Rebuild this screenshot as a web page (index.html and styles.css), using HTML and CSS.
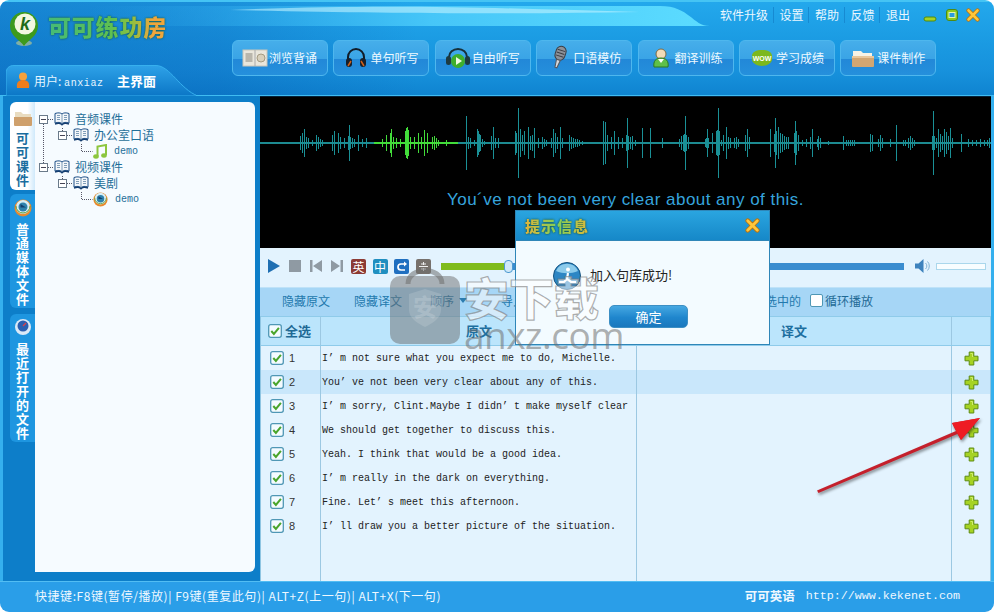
FILE: index.html
```html
<!DOCTYPE html>
<html lang="zh-CN">
<head>
<meta charset="utf-8">
<title>可可练功房</title>
<link rel="stylesheet" href="styles.css">
</head>
<body>
<svg class="defs" width="0" height="0" aria-hidden="true">
  <defs>
    <symbol id="book" viewBox="0 0 16 14">
      <path d="M1 1.5C4 .5 6.500 .7 8 2c1.500-1.300 4-1.500 7-.5V11c-3-1-5.500-.8-7 .5-1.500-1.300-4-1.500-7-.5z" fill="#f4f7fa" stroke="#1d4f86"/>
      <path d="M8 2v9.500M3 3.500h3M3 5.500h3M3 7.500h3M10 3.500h3M10 5.500h3M10 7.500h3" stroke="#7f9db8" fill="none"/>
      <path d="M1 12c3-1 5.500-.8 7 .7 1.500-1.500 4-1.700 7-.7" stroke="#153e70" stroke-width="1.500" fill="none"/>
    </symbol>
    <symbol id="minus" viewBox="0 0 9 9">
      <rect x=".5" y=".5" width="8" height="8" fill="#fff" stroke="#6a7a8a"/>
      <path d="M2 4.500h5" stroke="#445"/>
    </symbol>
    <symbol id="plus" viewBox="0 0 15 15">
      <path d="M5.200 1h4.600v4.200H14v4.600H9.800V14H5.200V9.800H1V5.200h4.200z" fill="#a6d323" stroke="#5f8c14" stroke-linejoin="round"/>
      <path d="M6.500 2.500h2v3.500" stroke="#d0ee6a" fill="none"/>
    </symbol>
    <symbol id="check" viewBox="0 0 14 14">
      <rect x=".7" y=".7" width="12.600" height="12.600" rx="2" fill="#f4fbff" stroke="#4f97b5" stroke-width="1.300"/>
      <path d="M3.300 7l2.600 3 5-6.200" fill="none" stroke="#4aa52b" stroke-width="2"/>
    </symbol>
    <symbol id="disc" viewBox="0 0 18 18">
      <circle cx="9" cy="9" r="8.500" fill="#e88a2c"/>
      <circle cx="9" cy="8" r="7" fill="#d8eef5"/>
      <circle cx="9" cy="8" r="4.500" fill="#2f82ad"/>
      <path d="M6.500 5l5.500 3.500H6.500z" fill="#123f6c"/>
      <path d="M2 7a7 7 0 0 0 14 0" fill="none" stroke="#5a9f3a"/>
    </symbol>
    <linearGradient id="sweep" x1="0" x2="1" y1="0" y2="0">
      <stop offset="0" stop-color="#2aa6ea" stop-opacity="0"/>
      <stop offset=".55" stop-color="#46c6f8"/>
      <stop offset="1" stop-color="#5cdcff"/>
    </linearGradient>
    <linearGradient id="tabfill" x1="0" x2="0" y1="0" y2="1">
      <stop offset="0" stop-color="#2ea2e8"/>
      <stop offset="1" stop-color="#0b76c6"/>
    </linearGradient>
  </defs>
</svg>

<div class="app">
  <header class="header">
    <svg class="sweep" viewBox="0 0 994 30" width="994" height="30" aria-hidden="true">
      <path d="M90 6H660c30 0 32 20 50 20H90z" fill="url(#sweep)"/>
      <path d="M230 10C400 3 520 9 640 12 520 14 400 14 230 10z" fill="#bff1ff" opacity=".6"/>
    </svg>
    <div class="head-left">
      <div class="brand">
        <svg class="logo" viewBox="0 0 30 36" width="30" height="36" aria-hidden="true">
          <ellipse cx="15" cy="32" rx="8" ry="3" fill="#9dbb9a" opacity=".8"/>
          <path d="M15 35C11 29 1 25 1 15a14 14 0 0 1 28 0c0 10-10 14-14 20z" fill="#3d9a1e"/>
          <circle cx="16" cy="13" r="10.500" fill="#f3f7e0"/>
          <text x="16" y="19" class="logo-k">k</text>
        </svg>
        <span class="brand-name">可可练功房</span>
      </div>
      <div class="user-tab">
        <svg class="tab-shape" viewBox="0 0 190 31" width="190" height="31" aria-hidden="true">
          <path d="M0 31V9C0 3 3 .5 8 .5H150c14 0 24 24 42 30.500z" fill="url(#tabfill)" stroke="#37b0ee"/>
        </svg>
        <svg class="user-ico" viewBox="0 0 14 17" width="14" height="17" aria-hidden="true">
          <circle cx="7" cy="4.500" r="4" fill="#f6a13a"/>
          <path d="M1 16c-1-6 2-8 6-8s7 2 6 8z" fill="#ee7d1c"/>
        </svg>
        <span class="user-name">用户: <span class="mono-s">anxiaz</span></span>
        <b class="user-main">主界面</b>
      </div>
    </div>
    <div class="head-right">
      <div class="topbar">
        <nav class="links">
          <a>软件升级</a><a>设置</a><a>帮助</a><a>反馈</a><a>退出</a>
        </nav>
        <div class="winbtns">
          <svg viewBox="0 0 14 14" width="14" height="14" aria-hidden="true"><rect x="1" y="9" width="12" height="4" rx="2" fill="#a6d323" stroke="#4f8a14"/></svg>
          <svg viewBox="0 0 14 14" width="14" height="14" aria-hidden="true"><rect x="1.500" y="1.500" width="11" height="11" rx="2.500" fill="#8fcb22" stroke="#4f8a14"/><rect x="4" y="4.500" width="6" height="5" fill="#2a9ce0" stroke="#e5f6b0"/></svg>
          <svg viewBox="0 0 14 14" width="14" height="14" aria-hidden="true"><path d="M2.500 2.500l9 9M11.500 2.500l-9 9" stroke="#b8730e" stroke-width="4.200" stroke-linecap="round"/><path d="M2.500 2.500l9 9M11.500 2.500l-9 9" stroke="#ffc63a" stroke-width="2.600" stroke-linecap="round"/></svg>
        </div>
      </div>
      <nav class="nav">
        <a class="nav-btn">
          <svg viewBox="0 0 26 18" width="26" height="18" aria-hidden="true"><rect x="1" y="1" width="24" height="16" fill="#e9e6dc" stroke="#c9c5b8"/><path d="M13 1v16" stroke="#aaa"/><rect x="3.500" y="4" width="7" height="9" fill="#b9b6ac"/><circle cx="19" cy="9" r="4" fill="#d8d0bc" stroke="#a59b82"/></svg>
          <span>浏览背诵</span>
        </a>
        <a class="nav-btn">
          <svg viewBox="0 0 22 22" width="22" height="22" aria-hidden="true"><path d="M3 13V10a8 8 0 0 1 16 0v3" fill="none" stroke="#111c28" stroke-width="2"/><rect x="1" y="11" width="6" height="9" rx="3" fill="#16202c"/><rect x="15" y="11" width="6" height="9" rx="3" fill="#16202c"/><path d="M3 19l3-5M19 19l-3-5" stroke="#d0611c" stroke-width="1.500"/></svg>
          <span>单句听写</span>
        </a>
        <a class="nav-btn">
          <svg viewBox="0 0 24 22" width="24" height="22" aria-hidden="true"><path d="M3 12V10a9 8 0 0 1 18 0v2" fill="none" stroke="#16303a" stroke-width="2"/><rect x="0" y="9" width="5" height="9" rx="2.500" fill="#1d3a40"/><rect x="19" y="9" width="5" height="9" rx="2.500" fill="#1d3a40"/><circle cx="12" cy="14" r="7" fill="#3fae2c"/><path d="M10 10l6 4-6 4z" fill="#f2fbe2"/></svg>
          <span>自由听写</span>
        </a>
        <a class="nav-btn">
          <svg viewBox="0 0 20 26" width="20" height="26" aria-hidden="true"><g transform="rotate(18 10 13)"><rect x="5" y="1" width="10" height="14" rx="5" fill="#8d9198" stroke="#3a3d44"/><path d="M6 5h8M6 8h8M6 11h8" stroke="#3a3d44"/><path d="M8 15h4l-1 8H9z" fill="#d6d8dc" stroke="#54575e"/></g></svg>
          <span>口语模仿</span>
        </a>
        <a class="nav-btn">
          <svg viewBox="0 0 18 22" width="18" height="22" aria-hidden="true"><circle cx="9" cy="7" r="5" fill="#f2dcb8" stroke="#7c6a44"/><path d="M2 20c-1-6 2-9 7-9s8 3 7 9z" fill="#5fc04a" stroke="#2c7a22"/><path d="M6 12h6l-3 4z" fill="#fff"/></svg>
          <span>翻译训练</span>
        </a>
        <a class="nav-btn">
          <svg viewBox="0 0 24 20" width="24" height="20" aria-hidden="true"><path d="M2 10C1 4 6 2 12 2s11 2 10 8c1 5-5 8-10 8S1 15 2 10z" fill="#7cb81e"/><text x="12" y="12.500" class="wow">WOW</text></svg>
          <span>学习成绩</span>
        </a>
        <a class="nav-btn">
          <svg viewBox="0 0 24 20" width="24" height="20" aria-hidden="true"><path d="M2 3h8l2 2h9v6H2z" fill="#f7f3e6"/><path d="M1 8h22v10a1 1 0 0 1-1 1H2a1 1 0 0 1-1-1z" fill="#d2a672"/><path d="M1 8h22v2H1z" fill="#e8c79c"/></svg>
          <span>课件制作</span>
        </a>
      </nav>
    </div>
  </header>

  <main class="main">
    <aside class="side">
      <div class="tabs">
        <div class="tab tab-on">
          <svg viewBox="0 0 18 14" width="18" height="14" aria-hidden="true"><path d="M1 0h6l2 2h8v5H1z" fill="#e9dcc0"/><path d="M0 5h18v8a1 1 0 0 1-1 1H1a1 1 0 0 1-1-1z" fill="#cfa06c"/></svg>
          <b class="tab-txt">可可课件</b>
        </div>
        <div class="tab tab-2">
          <svg width="18" height="18" aria-hidden="true"><use href="#disc"/></svg>
          <b class="tab-txt">普通媒体文件</b>
        </div>
        <div class="tab tab-3">
          <svg viewBox="0 0 18 18" width="18" height="18" aria-hidden="true"><circle cx="9" cy="9" r="8" fill="#dbe9f7"/><circle cx="9" cy="8" r="5.500" fill="#2b5fb0"/><path d="M9 8l3-3" stroke="#d8404a" stroke-width="1.500"/></svg>
          <b class="tab-txt">最近打开的文件</b>
        </div>
      </div>
      <div class="tree">
        <svg class="tree-lines" width="110" height="110" aria-hidden="true">
          <path d="M8.500 16V63M13 17.500h6M27.500 26V31M32 33.500h6M27.500 74V79M32 81.500h6M46.500 42V49.500h11M46.500 90V97.500h11M13 65.500h6" fill="none" stroke="#556" stroke-dasharray="1 1"/>
        </svg>
        <div class="node">
          <svg class="tw" width="9" height="9" aria-hidden="true"><use href="#minus"/></svg>
          <svg class="bk" width="16" height="14" aria-hidden="true"><use href="#book"/></svg>
          <span>音频课件</span>
        </div>
        <div class="node lv1">
          <svg class="tw" width="9" height="9" aria-hidden="true"><use href="#minus"/></svg>
          <svg class="bk" width="16" height="14" aria-hidden="true"><use href="#book"/></svg>
          <span>办公室口语</span>
        </div>
        <div class="node lv2">
          <svg viewBox="0 0 14 15" width="14" height="15" aria-hidden="true"><path d="M4.500 12V2.500L13 1v10" fill="none" stroke="#8cc63e" stroke-width="2"/><ellipse cx="3" cy="12.500" rx="2.800" ry="2.200" fill="#8cc63e"/><ellipse cx="11" cy="11.500" rx="2.800" ry="2.200" fill="#8cc63e"/></svg>
          <span class="leaf">demo</span>
        </div>
        <div class="node">
          <svg class="tw" width="9" height="9" aria-hidden="true"><use href="#minus"/></svg>
          <svg class="bk" width="16" height="14" aria-hidden="true"><use href="#book"/></svg>
          <span>视频课件</span>
        </div>
        <div class="node lv1">
          <svg class="tw" width="9" height="9" aria-hidden="true"><use href="#minus"/></svg>
          <svg class="bk" width="16" height="14" aria-hidden="true"><use href="#book"/></svg>
          <span>美剧</span>
        </div>
        <div class="node lv2">
          <svg width="15" height="15" aria-hidden="true"><use href="#disc"/></svg>
          <span class="leaf">demo</span>
        </div>
      </div>
    </aside>

    <section class="content">
      <div class="wave">
        <svg viewBox="0 0 731 92" width="731" height="92" aria-hidden="true">
          <path class="w-base" d="M0 46H114M198 46H731"/>
          <path class="w-spikes" d="M40 46v-7 14M42 46v-10 20M44 46v-14 28M46 46v-6 12M48 46v-5 10M52 46v-3 6M56 46v-8 16M58 46v-6 12M60 46v-4 8M62 46v-3 6M72 46v-8 16M74 46v-12 24M78 46v-10 20M80 46v-6 12M84 46v-5 10M88 46v-7 14M89 46v-18 36M90 46v-6 12M92 46v-5 10M94 46v-4 8M98 46v-8 16M102 46v-4 8M106 46v-5 10M206 46v-27 54M208 46v-6 12M210 46v-5 10M214 46v-3 6M217 46v-14 28M218 46v-12 24M219 46v-9 18M220 46v-8 16M222 46v-4 8M224 46v-2 4M231 46v-7 14M233 46v-16 32M235 46v-5 10M238 46v-5 10M255 46v-12 24M256 46v-10 20M258 46v-35 70M260 46v-14 28M262 46v-8 16M264 46v-12 24M268 46v-16 32M270 46v-7 14M272 46v-8 16M274 46v-15 30M278 46v-5 10M282 46v-6 12M284 46v-4 8M286 46v-3 6M291 46v-5 10M293 46v-14 28M295 46v-10 20M297 46v-6 12M300 46v-16 32M302 46v-5 10M309 46v-8 16M311 46v-6 12M313 46v-5 10M315 46v-4 8M317 46v-4 8M319 46v-3 6M322 46v-2 4M343 46v-22 44M345 46v-21 42M347 46v-8 16M351 46v-6 12M354 46v-12 24M358 46v-6 12M362 46v-5 10M366 46v-8 16M367 46v-25 50M368 46v-7 14M370 46v-6 12M372 46v-7 14M375 46v-3 6M382 46v-15 30M390 46v-15 30M402 46v-5 10M419 46v-4 8M421 46v-7 14M423 46v-8 16M424 46v-9 18M425 46v-27 54M426 46v-8 16M428 46v-6 12M445 46v-4 8M446 46v-5 10M447 46v-14 28M448 46v-5 10M452 46v-10 20M456 46v-12 24M457 46v-13 26M458 46v-35 70M459 46v-12 24M461 46v-3 6M463 46v-8 16M466 46v-16 32M468 46v-6 12M470 46v-5 10M474 46v-5 10M476 46v-6 12M478 46v-4 8M485 46v-8 16M487 46v-14 28M489 46v-6 12M510 46v-14 28M514 46v-9 18M515 46v-25 50M516 46v-12 24M518 46v-16 32M520 46v-10 20M522 46v-9 18M524 46v-7 14M526 46v-6 12M528 46v-6 12M534 46v-10 20M535 46v-22 44M536 46v-12 24M538 46v-8 16M542 46v-3 6M546 46v-4 8M550 46v-6 12M552 46v-14 28M557 46v-4 8M558 46v-7 14M560 46v-5 10M568 46v-2 4M583 46v-7 14M586 46v-3 6M588 46v-3 6M590 46v-3 6M592 46v-3 6M594 46v-3 6M610 46v-9 18M612 46v-8 16M618 46v-4 8M620 46v-8 16M622 46v-5 10M630 46v-4 8M636 46v-18 36M643 46v-3 6M645 46v-3 6M648 46v-5 10M650 46v-7 14M652 46v-5 10M654 46v-3 6M672 46v-7 14M673 46v-32 64M674 46v-7 14M676 46v-5 10M678 46v-14 28M680 46v-9 18M682 46v-7 14M684 46v-14 28M686 46v-11 22M688 46v-7 14M690 46v-15 30M692 46v-5 10M701 46v-9 18M708 46v-4 8M712 46v-3 6M716 46v-3 6M720 46v-4 8M724 46v-3 6M727 46v-3 6M729 46v-5 10"/>
          <path class="w-base w-green" d="M114 46H198"/>
          <path class="w-spikes w-green" d="M122 46v-4 8M126 46v-8 16M130 46v-10 20M131 46v-14 28M133 46v-6 12M136 46v-5 10M140 46v-4 8M145 46v-12 24M146 46v-15 30M147 46v-16 32M148 46v-13 26M150 46v-6 12M154 46v-6 12M158 46v-10 20M161 46v-6 12M164 46v-13 26M167 46v-10 20M172 46v-6 12M174 46v-7 14M176 46v-5 10M178 46v-3 6M186 46v-3 6"/>
        </svg>
        <p class="sentence">You´ve not been very clear about any of this.</p>
      </div>

      <div class="controls">
        <div class="transport">
          <svg viewBox="0 0 12 14" width="12" height="14" aria-hidden="true"><path d="M0 0l12 7-12 7z" fill="#1f6fb2"/></svg>
          <svg viewBox="0 0 12 12" width="12" height="12" aria-hidden="true"><rect width="12" height="12" fill="#8f9aa3"/></svg>
          <svg viewBox="0 0 12 12" width="12" height="12" aria-hidden="true"><path d="M0 0h2.500v12H0zM12 0v12L3 6z" fill="#8f9aa3"/></svg>
          <svg viewBox="0 0 12 12" width="12" height="12" aria-hidden="true"><path d="M12 0H9.500v12H12zM0 0v12l9-6z" fill="#8f9aa3"/></svg>
        </div>
        <div class="modes">
          <b class="mode m-en">英</b>
          <b class="mode m-zh">中</b>
          <span class="mode m-loop"><svg viewBox="0 0 15 15" width="15" height="15" aria-hidden="true"><path d="M11 5H7a3 3 0 0 0 0 6h4" fill="none" stroke="#fff" stroke-width="1.700"/><path d="M10 2.500L13 5l-3 2.500z" fill="#fff"/></svg></span>
          <span class="mode m-gray"><svg viewBox="0 0 15 15" width="15" height="15" aria-hidden="true"><path d="M3 7.500h9M7.500 3v3M7.500 9v3M5 5h5M5 10h5" stroke="#eee"/></svg></span>
        </div>
        <div class="progress">
          <div class="prog-done"></div>
          <span class="prog-knob"></span>
        </div>
        <svg class="spk" viewBox="0 0 15 14" width="15" height="14" aria-hidden="true"><path d="M0 4.500h3.500L8.500 0v14l-5-4.500H0z" fill="#3d82bd"/><path d="M10.500 4a4 4 0 0 1 0 6M12.500 2.500a6.500 6.500 0 0 1 0 9" fill="none" stroke="#7fb0d4"/></svg>
        <div class="volume"></div>
      </div>

      <div class="toolbar">
        <div class="tools">
          <a>隐藏原文</a><a>隐藏译文</a><a class="order">顺序 <i class="caret"></i></a><a>导入句库</a>
        </div>
        <div class="tools-end">
          <a>删除选中的</a>
          <label class="loop"><span class="box"></span>循环播放</label>
        </div>
      </div>

      <div class="table">
        <div class="row thead">
          <div class="c c1"><svg width="14" height="14" aria-hidden="true"><use href="#check"/></svg><b>全选</b></div>
          <div class="c c2"><b>原文</b></div>
          <div class="c c3"><b>译文</b></div>
          <div class="c c4"></div>
        </div>
        <div class="row">
          <div class="c c1"><svg width="14" height="14" aria-hidden="true"><use href="#check"/></svg><span>1</span></div>
          <div class="c c2 en">I’ m not sure what you expect me to do, Michelle.</div>
          <div class="c c3"></div>
          <div class="c c4"><svg width="15" height="15" aria-hidden="true"><use href="#plus"/></svg></div>
        </div>
        <div class="row row-on">
          <div class="c c1"><svg width="14" height="14" aria-hidden="true"><use href="#check"/></svg><span>2</span></div>
          <div class="c c2 en">You’ ve not been very clear about any of this.</div>
          <div class="c c3"></div>
          <div class="c c4"><svg width="15" height="15" aria-hidden="true"><use href="#plus"/></svg></div>
        </div>
        <div class="row">
          <div class="c c1"><svg width="14" height="14" aria-hidden="true"><use href="#check"/></svg><span>3</span></div>
          <div class="c c2 en">I’ m sorry, Clint.Maybe I didn’ t make myself clear</div>
          <div class="c c3"></div>
          <div class="c c4"><svg width="15" height="15" aria-hidden="true"><use href="#plus"/></svg></div>
        </div>
        <div class="row">
          <div class="c c1"><svg width="14" height="14" aria-hidden="true"><use href="#check"/></svg><span>4</span></div>
          <div class="c c2 en">We should get together to discuss this.</div>
          <div class="c c3"></div>
          <div class="c c4"><svg width="15" height="15" aria-hidden="true"><use href="#plus"/></svg></div>
        </div>
        <div class="row">
          <div class="c c1"><svg width="14" height="14" aria-hidden="true"><use href="#check"/></svg><span>5</span></div>
          <div class="c c2 en">Yeah. I think that would be a good idea.</div>
          <div class="c c3"></div>
          <div class="c c4"><svg width="15" height="15" aria-hidden="true"><use href="#plus"/></svg></div>
        </div>
        <div class="row">
          <div class="c c1"><svg width="14" height="14" aria-hidden="true"><use href="#check"/></svg><span>6</span></div>
          <div class="c c2 en">I’ m really in the dark on everything.</div>
          <div class="c c3"></div>
          <div class="c c4"><svg width="15" height="15" aria-hidden="true"><use href="#plus"/></svg></div>
        </div>
        <div class="row">
          <div class="c c1"><svg width="14" height="14" aria-hidden="true"><use href="#check"/></svg><span>7</span></div>
          <div class="c c2 en">Fine. Let’ s meet this afternoon.</div>
          <div class="c c3"></div>
          <div class="c c4"><svg width="15" height="15" aria-hidden="true"><use href="#plus"/></svg></div>
        </div>
        <div class="row">
          <div class="c c1"><svg width="14" height="14" aria-hidden="true"><use href="#check"/></svg><span>8</span></div>
          <div class="c c2 en">I’ ll draw you a better picture of the situation.</div>
          <div class="c c3"></div>
          <div class="c c4"><svg width="15" height="15" aria-hidden="true"><use href="#plus"/></svg></div>
        </div>
        <div class="row row-fill">
          <div class="c c1"></div><div class="c c2"></div><div class="c c3"></div><div class="c c4"></div>
        </div>
      </div>
    </section>
  </main>

  <footer class="status">
    <span class="keys">快捷键:F8键(暂停/播放)| F9键(重复此句)| ALT+Z(上一句)| ALT+X(下一句)</span>
    <span class="site"><b>可可英语</b><span class="url">http://www.kekenet.com</span></span>
  </footer>

  <div class="dialog">
    <div class="dlg-head">
      <b class="dlg-title">提示信息</b>
      <svg viewBox="0 0 14 14" width="15" height="15" aria-hidden="true"><path d="M2.500 2.500l9 9M11.500 2.500l-9 9" stroke="#b8730e" stroke-width="4.200" stroke-linecap="round"/><path d="M2.500 2.500l9 9M11.500 2.500l-9 9" stroke="#ffc63a" stroke-width="2.600" stroke-linecap="round"/></svg>
    </div>
    <div class="dlg-body">
      <div class="dlg-msg">
        <svg viewBox="0 0 28 28" width="28" height="28" aria-hidden="true"><circle cx="14" cy="14" r="13.500" fill="#2d86c4" stroke="#14527f"/><path d="M3 9a12 12 0 0 1 22 0c-7 3-15 3-22 0z" fill="#8ccbeb"/><circle cx="15" cy="7.500" r="2" fill="#fff"/><path d="M15 11l-1 6 4 3h5M14 17l-3 3H6" fill="none" stroke="#fff" stroke-width="2.200"/></svg>
        <span class="dlg-text">加入句库成功!</span>
      </div>
      <button class="dlg-ok" type="button">确定</button>
    </div>
  </div>

  <svg class="arrow" viewBox="0 0 170 80" width="170" height="80" aria-hidden="true">
    <path d="M2 74.500L141 15 137 7 165 2 146 24 142.500 18 3.500 77z" fill="#c4202c"/>
    <path d="M137 7L165 2 146 24z" fill="#ee1c24"/>
  </svg>

  <div class="mark">
    <svg viewBox="0 0 70 80" width="70" height="80" aria-hidden="true">
      <path d="M18 20C18 2 52 2 52 20" fill="none" stroke="#6d6d6d" stroke-opacity=".55" stroke-width="5"/>
      <rect y="12" width="70" height="68" rx="10" fill="#6d6d6d" fill-opacity=".5"/>
      <path d="M19 30l16-5 16 5v16c0 8-8 13-16 17-8-4-16-9-16-17z" fill="#fff" fill-opacity=".14"/>
      <text x="35" y="52" class="mark-glyph">安</text>
    </svg>
    <div class="mark-text">
      <span class="mark-cn">安下载</span>
      <span class="mark-en">anxz.com</span>
    </div>
  </div>
</div>
</body>
</html>
```

FILE: styles.css
```css
* { box-sizing: border-box; }
html, body { margin: 0; padding: 0; background: #fff; }
body { font-family: "Noto Sans CJK SC", "Liberation Sans", sans-serif; font-size: 12px; }
.defs { position: absolute; }
p { margin: 0; }
svg { display: block; flex: none; }

.app {
  position: relative;
  width: 994px;
  height: 612px;
  display: flex;
  flex-direction: column;
  overflow: hidden;
  border-radius: 9px 9px 9px 9px;
}

/* header */
.header {
  position: relative;
  height: 96px;
  display: flex;
  border-top: 2px solid #45c4f4;
  border-bottom: 1px solid #3fbcf2;
  background:
    linear-gradient(90deg, rgba(4, 78, 170, .38), rgba(4, 78, 170, .28) 22%, rgba(4, 78, 170, 0) 42%),
    linear-gradient(180deg, #23a8ec 0, #1a9ae2 45%, #1791dc 75%, #0f84d0 100%);
}
.sweep { position: absolute; left: 0; top: -2px; }
.head-left {
  position: relative;
  width: 232px;
  display: flex;
  flex-direction: column;
  justify-content: space-between;
}
.brand { display: flex; align-items: center; gap: 9px; padding: 9px 0 0 9px; }
.logo-k { font: italic bold 18px "Liberation Sans", sans-serif; fill: #1f6b18; text-anchor: middle; }
.brand-name {
  font-size: 23px;
  font-weight: 900;
  letter-spacing: .8px;
  line-height: 30px;
  margin-top: -7px;
  background: linear-gradient(90deg, #45bb78, #5fc050 55%, #8cc040 70%, #f0a63c 88%);
  -webkit-background-clip: text;
  background-clip: text;
  color: transparent;
  filter: drop-shadow(0 0 1px #155a38);
}
.user-tab {
  position: relative;
  margin-left: 6px;
  height: 30px;
  display: flex;
  align-items: center;
  color: #fff;
  padding-left: 10px;
}
.tab-shape { position: absolute; left: 0; top: 0; }
.user-ico { position: relative; }
.user-name { position: relative; margin-left: 4px; font-size: 12px; color: #e6f6ff; width: 83px; }
.mono-s { font: 10px "Liberation Mono", monospace; letter-spacing: .6px; }
.user-main { position: relative; font-size: 13px; }

.head-right { position: relative; flex: 1; display: flex; flex-direction: column; }
.topbar { display: flex; justify-content: flex-end; align-items: center; height: 26px; padding: 0 14px 0 0; }
.links { display: flex; color: #eaf7ff; font-size: 12px; line-height: 16px; }
.links a { padding: 0 5px 0 5.500px; border-left: 1px solid #168ad2; }
.links a:first-child { border-left: 0; }
.winbtns { display: flex; gap: 7.500px; margin-left: 8px; }

.nav { display: flex; gap: 5.400px; margin-top: 12px; }
.nav-btn {
  width: 96px;
  height: 36px;
  padding-left: 8px;
  display: flex;
  align-items: center;
  border: 1px solid #4eb7ee;
  border-radius: 6px;
  color: #eef9ff;
  font-size: 12px;
  background: linear-gradient(180deg, #46aeea 0, #3aa4e6 52%, #2288d8 54%, #2590dc 100%);
}
.nav-btn svg { width: 28px; }
.nav-btn span { padding-bottom: 2px; }
.wow { font: bold 7px "Liberation Sans", sans-serif; fill: #fff; text-anchor: middle; }

/* main */
.main {
  flex: 1;
  display: flex;
  min-height: 0;
  background: #0d7ec9;
  border-left: 3px solid #35b0ee;
  border-right: 3px solid #35b0ee;
}
.side { width: 257px; display: flex; padding: 6px 5px 9px 7px; }
.tabs { width: 25px; display: flex; flex-direction: column; }
.tab {
  display: flex;
  flex-direction: column;
  align-items: center;
  border-radius: 6px 0 0 6px;
  background: #1e96e0;
  color: #fff;
}
.tab-txt { width: 14px; font-size: 13px; line-height: 14px; text-align: center; }
.tab-on {
  height: 88px;
  padding-top: 10px;
  color: #1a6d9e;
  background: linear-gradient(90deg, #fff 70%, #cfe9fb);
}
.tab-on .tab-txt { margin-top: 5px; }
.tab-2 { height: 114px; margin-top: 4px; padding-top: 5px; }
.tab-2 .tab-txt { margin-top: 5px; }
.tab-3 { height: 128px; margin-top: 6px; padding-top: 4px; }
.tab-3 .tab-txt { margin-top: 6px; }

.tree {
  position: relative;
  flex: 1;
  background: #f6fbff;
  border-radius: 0 6px 6px 0;
  padding-top: 9px;
  color: #1f6f99;
  font-size: 12px;
}
.tree-lines { position: absolute; left: 0; top: 0; }
.node { position: relative; display: flex; align-items: center; height: 16px; padding-left: 4px; line-height: 16px; }
.tw { margin-right: 6px; }
.bk { margin-right: 5px; }
.lv1 { padding-left: 23px; }
.lv2 { padding-left: 58px; }
.leaf { font: 10px "Liberation Mono", monospace; margin-left: 7px; }

.content { flex: 1; display: flex; flex-direction: column; background: #e3f2fd; min-width: 0; }

.wave { height: 152px; background: #000; border-top: 1px solid #04203a; }
.w-base { stroke: #1d8b91; stroke-width: 2; fill: none; }
.w-spikes { stroke: #1a9096; stroke-width: 1; fill: none; transform: translateX(.5px); }
.w-base.w-green { stroke: #42dc3a; }
.w-spikes.w-green { stroke: #42dc3a; }
.sentence {
  text-align: center;
  font: 17px/22px "Liberation Sans", sans-serif;
  letter-spacing: .47px;
  color: #36a4dc;
}

.controls { height: 39px; display: flex; align-items: center; padding: 0 5px 3px 8px; background: #e3f3fe; }
.transport { display: flex; align-items: center; gap: 9px; }
.modes { display: flex; gap: 6.500px; margin-left: 8px; }
.mode { width: 15px; height: 15px; border-radius: 2px; font-size: 12px; line-height: 15px; text-align: center; color: #fff; font-weight: 400; }
.m-en { background: #8c3a34; }
.m-zh { background: #1f8fc0; }
.m-loop { background: #1f6fc0; }
.m-gray { background: #77716c; }
.progress { position: relative; flex: 1; margin-left: 10px; height: 7px; background: #3a8ccf; }
.prog-done { width: 67px; height: 100%; background: #7fbb1c; }
.prog-knob {
  position: absolute;
  left: 63px;
  top: -3px;
  width: 9px;
  height: 13px;
  border-radius: 4px;
  border: 1px solid #4c9ad0;
  background: #cfe8f8;
}
.spk { margin-left: 11px; }
.volume { width: 50px; height: 7px; margin-left: 6px; background: #f8fdff; border: 1px solid #aad7ec; }

.toolbar {
  height: 29px;
  display: flex;
  align-items: center;
  justify-content: space-between;
  padding: 0 118px 3px 22px;
  background: #a6d6f6;
  color: #2379ad;
  font-size: 12px;
  border-top: 1px solid #bfe2f8;
}
.tools { display: flex; gap: 24px; }
.order { display: flex; align-items: center; gap: 3px; margin: 0 10px 0 4px; }
.caret { width: 0; height: 0; border: 4px solid transparent; border-top: 5px solid #2c7cb0; border-bottom: 0; margin-left: 2px; }
.tools-end { display: flex; align-items: center; gap: 9px; }
.loop { display: flex; align-items: center; gap: 2px; color: #1f6a95; }
.box { width: 13px; height: 13px; border: 1px solid #4f97b5; border-radius: 2px; background: #fff; }

.table { flex: 1; display: flex; flex-direction: column; min-height: 0; border-left: 1px solid #8fc5e2; border-right: 1px solid #8fc5e2; }
.row { display: flex; height: 24px; flex: none; background: #e3f3fe; }
.row-on { background: #c9e7fb; }
.row-fill { flex: 1; height: auto; }
.thead { height: 30px; background: #bbe5fc; border-top: 1px solid #8fcbea; border-bottom: 1px solid #8fcbea; color: #1d6f9f; font-size: 13px; }
.c { display: flex; align-items: center; border-right: 1px solid #9cc8e2; }
.c1 { width: 60px; padding-left: 7px; gap: 3px; color: #1f6a95; }
.row:not(.thead) .c1 { padding-left: 9px; gap: 5px; }
.row:not(.thead) .c1 span { font: 11px "Liberation Sans", sans-serif; color: #333; }
.c2 { width: 316px; padding-left: 1px; }
.c3 { width: 315px; }
.c4 { flex: 1; border-right: 0; justify-content: center; }
.thead .c2, .thead .c3 { justify-content: center; }
.thead b { padding-bottom: 1px; }
.en { font: 10px "Liberation Mono", monospace; color: #222; white-space: nowrap; overflow: hidden; padding-top: 1px; }

.status {
  height: 31px;
  flex: none;
  display: flex;
  align-items: center;
  justify-content: space-between;
  padding: 0 34px 3px 35px;
  background: #2a9ee8;
  border-top: 1px solid #52bdf3;
  color: #eef8ff;
  font-size: 12px;
}
.keys { letter-spacing: .55px; }
.site { display: flex; align-items: center; gap: 11px; }
.site b { font-size: 12.500px; }
.url { font: 11.700px "Liberation Mono", monospace; }

/* dialog */
.dialog {
  position: absolute;
  left: 515px;
  top: 210px;
  width: 255px;
  height: 135px;
  display: flex;
  flex-direction: column;
  border: 1px solid #2f86b8;
  background: #f3fbff;
}
.dlg-head {
  height: 30px;
  flex: none;
  display: flex;
  align-items: center;
  justify-content: space-between;
  padding: 0 9px 0 9px;
  background: linear-gradient(180deg, #2aa5e0, #1688c8);
  border-bottom: 1px solid #2f86b8;
}
.dlg-title {
  font-size: 15px;
  font-weight: 900;
  letter-spacing: 1px;
  background: linear-gradient(90deg, #e3b43a, #7fd05a 50%, #e0b83a);
  -webkit-background-clip: text;
  background-clip: text;
  color: transparent;
  filter: drop-shadow(0 0 1px #0e4a30);
}
.dlg-body { flex: 1; display: flex; flex-direction: column; }
.dlg-msg { display: flex; align-items: center; gap: 9px; margin: 21px 0 0 37px; color: #222; font-size: 13px; }
.dlg-text { padding-bottom: 4px; }
.dlg-ok {
  width: 79px;
  height: 23px;
  margin: 15px 0 0 93px;
  padding: 0;
  border: 1px solid #3c8fc4;
  border-radius: 5px;
  color: #fff;
  font: 13px "Noto Sans CJK SC", sans-serif;
  background: linear-gradient(180deg, #46a8e2, #1f86cd 55%, #1a78bd);
}

.arrow { position: absolute; left: 815px; top: 416px; filter: drop-shadow(1px 2px 1.500px rgba(0, 0, 0, .45)); }

.mark { position: absolute; left: 390px; top: 264px; display: flex; gap: 4px; }
.mark-glyph { font-size: 24px; font-weight: 700; fill: #fff; fill-opacity: .18; text-anchor: middle; }
.mark-text { display: flex; flex-direction: column; align-items: flex-start; width: 140px; padding-top: 8px; }
.mark-cn {
  font-size: 45px;
  line-height: 50px;
  font-weight: 900;
  color: rgba(255, 255, 255, .55);
  -webkit-text-stroke: 1.200px rgba(120, 120, 120, .6);
}
.mark-en {
  font: 37px/26px "Open Sans", sans-serif;
  color: rgba(110, 110, 110, .55);
  letter-spacing: -.5px;
}
```
